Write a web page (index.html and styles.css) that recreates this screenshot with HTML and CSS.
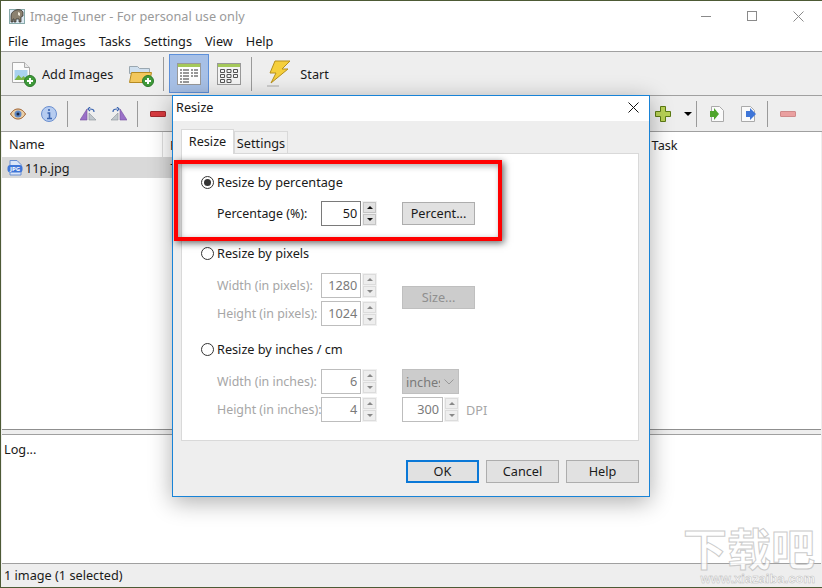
FILE: index.html
```html
<!DOCTYPE html>
<html>
<head>
    <meta charset="utf-8">
    <title>Image Tuner</title>
    <link rel="stylesheet" href="styles.css">
</head>
<body>
    <div class="window">
        <div class="titlebar">
            <svg class="app-icon" width="16" height="16" viewBox="0 0 16 16">
                <rect x="0.5" y="1.5" width="15" height="14" fill="#dce8f2" stroke="#8aa"/>
                <path d="M2 14V8c0-3 2-5 5-6 3-1 6 0 7 2v4l-2 1v5h-2v-3H7v3H5v-3H4v3z" fill="#8b8170" stroke="#2a2a26" stroke-width=".7"/>
                <path d="M9 4l2 1v3l-2-1z" fill="#efe9da"/>
            </svg>
            <span class="title-text">Image Tuner - For personal use only</span>
            <div class="caps">
                <div class="cap"><svg width="10" height="10" viewBox="0 0 10 10"><path d="M0 5.500h10" stroke="#8a8a8a"/></svg></div>
                <div class="cap"><svg width="10" height="10" viewBox="0 0 10 10"><rect x=".5" y=".5" width="9" height="9" fill="none" stroke="#8a8a8a"/></svg></div>
                <div class="cap"><svg width="11" height="11" viewBox="0 0 11 11"><path d="M.5.5l10 10M10.500.5l-10 10" stroke="#8a8a8a"/></svg></div>
            </div>
        </div>

        <div class="menubar">
            <span>File</span><span>Images</span><span>Tasks</span><span>Settings</span><span>View</span><span>Help</span>
        </div>

        <div class="toolbar">
            <svg class="tb-add" width="26" height="26" viewBox="0 0 26 26">
                <path d="M2.500 1.500h12l5 5v15h-17z" fill="#fbfbfb" stroke="#aaa"/>
                <path d="M14.500 1.500v5h5" fill="#e8e8e8" stroke="#aaa"/>
                <rect x="4.500" y="9" width="13" height="10" fill="#a9d2f0"/>
                <path d="M4.500 19l4-5 3 3 2-2 4 4z" fill="#7ab648"/>
                <circle cx="20" cy="20" r="5.500" fill="#3f9a3a" stroke="#2c7a2a"/>
                <path d="M20 17v6M17 20h6" stroke="#fff" stroke-width="2"/>
            </svg>
            <span class="tb-label">Add Images</span>
            <svg class="tb-folder" width="26" height="26" viewBox="0 0 26 26">
                <path d="M1.500 5.500h8l2 2h10v5h-20z" fill="#cfdfee" stroke="#9aa7b0"/>
                <path d="M1.500 21.500l2-10h20l-2 10z" fill="#f2c75c" stroke="#b58a22"/>
                <circle cx="20" cy="20" r="5.500" fill="#3f9a3a" stroke="#2c7a2a"/>
                <path d="M20 17v6M17 20h6" stroke="#fff" stroke-width="2"/>
            </svg>
            <div class="sep sep-tall"></div>
            <div class="view-btn selected">
                <svg width="24" height="22" viewBox="0 0 24 22">
                    <rect x=".5" y=".5" width="23" height="21" fill="#fff" stroke="#999"/>
                    <rect x="1" y="1" width="22" height="3" fill="#a5c95a"/>
                    <path d="M3 7h2M6 7h6M3 10h2M6 10h6M3 13h2M6 13h6M3 16h2M6 16h6M3 19h2M6 19h6M14 7h2M17 7h4M14 10h2M17 10h4M14 13h2M17 13h4" stroke="#333"/>
                </svg>
            </div>
            <div class="view-btn">
                <svg width="24" height="22" viewBox="0 0 24 22">
                    <rect x=".5" y=".5" width="23" height="21" fill="#f4f4f4" stroke="#999"/>
                    <rect x="1" y="1" width="22" height="3" fill="#a5c95a"/>
                    <path d="M3.500 6.500h4v3h-4zM10 6.500h4v3h-4zM16.500 6.500h4v3h-4zM3.500 11.500h4v3h-4zM10 11.500h4v3h-4zM16.500 11.500h4v3h-4zM3.500 16.500h4v3h-4zM10 16.500h4v3h-4z" fill="none" stroke="#555"/>
                </svg>
            </div>
            <div class="sep sep-tall sep-view"></div>
            <svg class="tb-bolt" width="26" height="30" viewBox="0 0 26 30">
                <path d="M10 2h15l-8 8h6L6 24l5-10H5z" fill="#f5cf3c" stroke="#b58f1c"/>
                <path d="M2 27h12" stroke="#ccc" stroke-width="2"/>
            </svg>
            <span class="tb-label tb-start">Start</span>
        </div>

        <div class="toolbar2">
            <svg class="t2-eye" width="16" height="12" viewBox="0 0 16 12">
                <path d="M.5 6C3 2 5.500 1 8 1s5 1 7.500 5C13 10 10.500 11 8 11S3 10 .5 6z" fill="#e9cfa8" stroke="#9b5a26"/>
                <circle cx="8" cy="6" r="3.500" fill="#5c86c4"/>
                <circle cx="8" cy="6" r="1.500" fill="#1d2a44"/>
            </svg>
            <svg class="t2-info" width="16" height="16" viewBox="0 0 16 16">
                <circle cx="8" cy="8" r="7.500" fill="#b6ccf0" stroke="#6b8fcf"/>
                <path d="M8 3v2M6.500 7H8.500v5M6 12.500h5" stroke="#3a64b0" stroke-width="1.600" fill="none"/>
            </svg>
            <div class="sep t2-sep1"></div>
            <svg class="t2-flip1" width="16" height="14" viewBox="0 0 16 14">
                <path d="M7 2v11H0z" fill="#9a70c8" stroke="#75509f" stroke-width=".6"/>
                <path d="M9 13V6l7 7z" fill="#bfc6cc" stroke="#8a9299" stroke-width=".6"/>
                <path d="M14 5c0-2-1-3-4-3M10 0L8 2l2 2" fill="none" stroke="#3a64b0" stroke-width="1.200"/>
            </svg>
            <svg class="t2-flip2" width="16" height="14" viewBox="0 0 16 14">
                <path d="M9 2v11h7z" fill="#9a70c8" stroke="#75509f" stroke-width=".6"/>
                <path d="M7 13V6l-7 7z" fill="#bfc6cc" stroke="#8a9299" stroke-width=".6"/>
                <path d="M2 5c0-2 1-3 4-3M6 0l2 2-2 2" fill="none" stroke="#3a64b0" stroke-width="1.200"/>
            </svg>
            <div class="sep t2-sep2"></div>
            <div class="minus t2-minus"></div>

            <svg class="t2-plus" width="16" height="16" viewBox="0 0 16 16">
                <path d="M5.500.5h5v5h5v5h-5v5h-5v-5h-5v-5h5z" fill="#b9d256" stroke="#5c7a14"/>
            </svg>
            <div class="drop-arrow"></div>
            <div class="sep t2-sep3"></div>
            <svg class="t2-doc" width="14" height="16" viewBox="0 0 14 16">
                <path d="M1.500.5h8l4 4v11h-12z" fill="#fafafa" stroke="#aaa"/>
                <path d="M0 5h4V2l5 6-5 6v-3H0z" fill="#4fa52c"/>
            </svg>
            <svg class="t2-doc2" width="16" height="16" viewBox="0 0 16 16">
                <path d="M.5.5h9l4 4v11H.5z" fill="#fafafa" stroke="#aaa"/>
                <path d="M5 5h4V2l6 6-6 6v-3H5z" fill="#3f76d8"/>
            </svg>
            <div class="sep t2-sep4"></div>
            <div class="minus minus-off t2-minus2"></div>
        </div>

        <div class="list">
            <div class="list-head">
                <span class="col-name">Name</span>
                <span class="col-file">F</span>
                <span class="col-task">Task</span>
            </div>
            <div class="list-row">
                <svg width="16" height="16" viewBox="0 0 16 16">
                    <path d="M3 .5h7l4 4v10.500H3z" fill="#dbe6f7" stroke="#6a8fd0"/>
                    <rect x=".5" y="5" width="15" height="7.500" rx="3" fill="#3f76d8"/>
                    <text x="8" y="11" font-size="6" font-weight="700" text-anchor="middle" fill="#fff">JPG</text>
                </svg>
                <span>11p.jpg</span>
                <span class="row-cut">T</span>
            </div>
        </div>

        <div class="splitter"></div>

        <div class="log">Log...</div>

        <div class="statusbar">1 image (1 selected)</div>
    </div>

    <div class="dialog">
        <div class="dlg-title">
            <span>Resize</span>
            <svg width="11" height="11" viewBox="0 0 11 11"><path d="M.5.5l10 10M10.500.5l-10 10" stroke="#111"/></svg>
        </div>
        <div class="dlg-body">
            <div class="tabs">
                <div class="tab active">Resize</div>
                <div class="tab">Settings</div>
            </div>
            <div class="pane">
                <div class="radio-row first"><span class="radio on"></span>Resize by percentage</div>
                <div class="fields fields-a">
                    <label>Percentage (%):</label>
                    <div class="num">
                        <div class="num-input focus">50</div>
                        <div class="spin"><b class="up"></b><b class="down"></b></div>
                    </div>
                    <div class="btn side">Percent...</div>
                </div>

                <div class="radio-row second"><span class="radio"></span>Resize by pixels</div>
                <div class="fields off">
                    <label>Width (in pixels):</label>
                    <div class="num">
                        <div class="num-input">1280</div>
                        <div class="spin"><b class="up"></b><b class="down"></b></div>
                    </div>
                    <div class="btn btn-off side span2">Size...</div>
                    <label>Height (in pixels):</label>
                    <div class="num">
                        <div class="num-input">1024</div>
                        <div class="spin"><b class="up"></b><b class="down"></b></div>
                    </div>
                </div>

                <div class="radio-row third"><span class="radio"></span>Resize by inches / cm</div>
                <div class="fields off">
                    <label>Width (in inches):</label>
                    <div class="num">
                        <div class="num-input">6</div>
                        <div class="spin"><b class="up"></b><b class="down"></b></div>
                    </div>
                    <div class="select side">
                        <span>inches</span>
                        <svg width="10" height="6" viewBox="0 0 10 6"><path d="M.5.5L5 5 9.500.5" fill="none" stroke="#999"/></svg>
                    </div>
                    <label>Height (in inches):</label>
                    <div class="num">
                        <div class="num-input">4</div>
                        <div class="spin"><b class="up"></b><b class="down"></b></div>
                    </div>
                    <div class="dpi side">
                        <div class="num">
                            <div class="num-input">300</div>
                            <div class="spin"><b class="up"></b><b class="down"></b></div>
                        </div>
                        <span class="dpi-label">DPI</span>
                    </div>
                </div>
            </div>
            <div class="dlg-buttons">
                <div class="btn default">OK</div>
                <div class="btn">Cancel</div>
                <div class="btn">Help</div>
            </div>
        </div>
        <div class="highlight"></div>
    </div>

    <div class="watermark">
        <div class="wm-big">下载吧</div>
        <div class="wm-small">www.xiazaiba.com</div>
    </div>
</body>
</html>
```

FILE: styles.css
```css
* {
    box-sizing: border-box;
}

html, body {
    margin: 0;
    height: 100%;
    overflow: hidden;
}

body {
    position: relative;
    width: 822px;
    height: 588px;
    background: #4d5a35;
    font-family: "Noto Sans", "Liberation Sans", sans-serif;
    font-size: 12.7px;
    color: #1a1a1a;
}

.window {
    display: flex;
    flex-direction: column;
    margin: 1px 0 1px 1px;
    height: 586px;
    background: #eee;
}

/* title + menu */
.titlebar {
    display: flex;
    align-items: center;
    height: 30px;
    background: #fff;
    padding: 0 1px 0 8px;
    flex: none;
}

.app-icon {
    margin-right: 5px;
}

.title-text {
    color: #9a9a9a;
}

.caps {
    display: flex;
    margin-left: auto;
    height: 30px;
}

.cap {
    display: flex;
    align-items: center;
    justify-content: center;
    width: 46px;
}

.menubar {
    display: flex;
    gap: 13px;
    align-items: center;
    height: 21px;
    padding-left: 7px;
    background: #fff;
    border-bottom: 1px solid #a0a0a0;
    flex: none;
}

/* main toolbar */
.toolbar {
    display: flex;
    align-items: center;
    height: 44px;
    border-bottom: 1px solid #a0a0a0;
    padding-left: 9px;
    flex: none;
}

.tb-label {
    margin-left: 6px;
}

.tb-folder {
    margin-left: 15px;
}

.sep {
    width: 1px;
    background: #9a9a9a;
    flex: none;
}

.sep-tall {
    height: 34px;
    margin-left: 9px;
}

.view-btn {
    display: flex;
    align-items: center;
    justify-content: center;
    width: 40px;
    height: 39px;
    margin-left: 5px;
    border: 1px solid transparent;
}

.view-btn.selected {
    background: #a7c0e6;
    border-color: #5d90da;
}

.view-btn + .view-btn {
    margin-left: 0;
}

.sep-view {
    margin-left: 2px;
}

.tb-bolt {
    margin-left: 13px;
}

.tb-start {
    margin-left: 9px;
}

/* second toolbar */
.toolbar2 {
    display: flex;
    align-items: center;
    height: 36px;
    border-bottom: 1px solid #a0a0a0;
    padding-left: 9px;
    flex: none;
}

.toolbar2 .sep {
    height: 26px;
}

.t2-info { margin-left: 15px; }
.t2-sep1 { margin-left: 10px; }
.t2-flip1 { margin-left: 12px; }
.t2-flip2 { margin-left: 15px; }
.t2-sep2 { margin-left: 10px; }
.t2-minus { margin-left: 12px; }
.t2-plus { margin-left: 489px; }
.t2-sep3 { margin-left: 4px; }
.t2-doc { margin-left: 13px; }
.t2-doc2 { margin-left: 17px; }
.t2-sep4 { margin-left: 10px; }
.t2-minus2 { margin-left: 12px; }

.minus {
    width: 16px;
    height: 6px;
    background: #d83a3f;
    border: 1px solid #a22a2e;
    border-radius: 1px;
    flex: none;
}

.minus-off {
    background: #eaa0a0;
    border-color: #cf8a8a;
}

.drop-arrow {
    width: 0;
    height: 0;
    margin-left: 13px;
    border-left: 4px solid transparent;
    border-right: 4px solid transparent;
    border-top: 4px solid #000;
}

/* file list */
.list {
    position: relative;
    height: 298px;
    margin: 0 1px;
    background: #fff;
    border-bottom: 1px solid #8f8f8f;
    flex: none;
}

.list-head {
    display: flex;
    align-items: center;
    height: 25px;
    padding-left: 7px;
}

.col-name {
    width: 154px;
    border-right: 1px solid #ddd;
    line-height: 25px;
}

.col-file {
    margin-left: 7px;
}

.col-task {
    margin-left: 475px;
}

.list-row {
    display: flex;
    align-items: center;
    gap: 2px;
    height: 21px;
    padding-left: 5px;
    width: 180px;
    background: #d9d9d9;
}

.row-cut {
    margin-left: 99px;
}

.splitter {
    height: 4px;
    flex: none;
}

.log {
    height: 130px;
    margin: 0 1px;
    padding: 5px 2px;
    background: #fff;
    border-top: 1px solid #a0a0a0;
    border-bottom: 1px solid #a0a0a0;
    flex: none;
}

.statusbar {
    display: flex;
    align-items: center;
    flex: 1;
    padding: 0 0 2px 3px;
}

/* resize dialog */
.dialog {
    position: absolute;
    left: 172px;
    top: 95px;
    width: 478px;
    height: 402px;
    display: flex;
    flex-direction: column;
    background: #eee;
    border: 1px solid #1883d7;
    box-shadow: 0 5px 22px rgba(0, 0, 0, 0.32);
}

.dlg-title {
    display: flex;
    align-items: center;
    justify-content: space-between;
    height: 25px;
    padding: 0 10px 3px 3px;
    background: #fff;
    flex: none;
}

.dlg-body {
    flex: 1;
    padding: 8px 10px 0 8px;
}

.tabs {
    display: flex;
    align-items: flex-end;
    height: 24px;
}

.tab {
    height: 22px;
    width: 54px;
    line-height: 22px;
    text-align: center;
    background: #f0f0f0;
    border: 1px solid #d9d9d9;
    border-bottom: none;
}

.tab.active {
    position: relative;
    z-index: 1;
    width: 53px;
    height: 25px;
    line-height: 23px;
    background: #fff;
    margin-bottom: -1px;
}

.pane {
    height: 288px;
    padding: 18px 0 0 19px;
    background: #fff;
    border: 1px solid #d9d9d9;
}

.radio-row {
    display: flex;
    align-items: center;
    gap: 3px;
    height: 20px;
}

.radio-row.second { margin-top: 17px; }
.radio-row.third { margin-top: 13px; }

.radio {
    position: relative;
    width: 13px;
    height: 13px;
    background: #fff;
    border: 1px solid #333;
    border-radius: 50%;
    flex: none;
}

.radio.on::after {
    content: "";
    position: absolute;
    left: 2px;
    top: 2px;
    width: 7px;
    height: 7px;
    border-radius: 50%;
    background: #333;
}

.fields {
    display: grid;
    grid-template-columns: 104px 56px auto;
    grid-auto-rows: 25px;
    row-gap: 3px;
    justify-content: start;
    align-items: center;
    margin-top: 10px;
    padding-left: 16px;
}

.fields-a {
    margin-top: 9px;
}

.fields label {
    padding-bottom: 1px;
    font-size: 12.4px;
    white-space: nowrap;
}

.fields.off label,
.fields.off .dpi-label {
    color: #a6a6a6;
}

.num {
    display: flex;
    gap: 1px;
    height: 25px;
}

.num-input {
    width: 41px;
    padding-right: 3px;
    line-height: 22px;
    text-align: right;
    background: #fff;
    border: 1px solid #bdbdbd;
}

.off .num-input {
    color: #7a7a7a;
}

.num-input.focus {
    border-color: #7a7a7a;
}

.spin {
    display: flex;
    flex-direction: column;
    justify-content: space-between;
    width: 15px;
    height: 25px;
    padding: 1px;
    background: #f0f0f0;
}

.spin b {
    display: flex;
    align-items: center;
    justify-content: center;
    height: 11px;
    background: #e1e1e1;
    border: 1px solid #c4c4c4;
}

.spin b::after {
    content: "";
    border-left: 3px solid transparent;
    border-right: 3px solid transparent;
}

.spin .up::after { border-bottom: 3px solid #111; }
.spin .down::after { border-top: 3px solid #111; }

.off .spin b {
    background: #eee;
    border-color: #dcdcdc;
}

.off .spin .up::after { border-bottom-color: #888; }
.off .spin .down::after { border-top-color: #888; }

.btn {
    width: 73px;
    height: 23px;
    line-height: 21px;
    text-align: center;
    background: #e1e1e1;
    border: 1px solid #adadad;
}

.side {
    margin-left: 25px;
}

.span2 {
    grid-row: span 2;
    align-self: start;
    margin-top: 13px;
}

.btn-off {
    background: #ccc;
    border-color: #bfbfbf;
    color: #8f8f8f;
}

.select {
    display: flex;
    align-items: center;
    justify-content: space-between;
    width: 57px;
    height: 25px;
    padding: 0 4px 0 3px;
    color: #7a7a7a;
    background: #ccc;
    border: 1px solid #bfbfbf;
}

.select span {
    width: 34px;
    overflow: hidden;
    line-height: 22px;
}

.select svg {
    flex: none;
}

.dpi {
    display: flex;
    align-items: center;
}

.dpi-label {
    margin-left: 7px;
}

.dlg-buttons {
    display: flex;
    justify-content: flex-end;
    gap: 7px;
    margin-top: 19px;
}

.btn.default {
    border: 2px solid #0a78d7;
    line-height: 19px;
}

.highlight {
    position: absolute;
    left: 1px;
    top: 64px;
    width: 328px;
    height: 81px;
    border: 4px solid #f00;
    box-shadow: 2px 2px 7px rgba(0, 0, 0, 0.6), inset 2px 2px 6px rgba(0, 0, 0, 0.35);
}

/* site stamp in the corner */
.watermark {
    position: absolute;
    right: 7px;
    top: 522px;
    width: 134px;
    font-family: "Noto Sans CJK SC", sans-serif;
    text-align: right;
    color: #fff;
    opacity: 0.8;
}

.wm-big {
    font-size: 44px;
    line-height: 50px;
    font-weight: 700;
    -webkit-text-stroke: 1px #c0c0c0;
}

.wm-small {
    font-family: "Liberation Sans", sans-serif;
    font-size: 13px;
    line-height: 13px;
    font-weight: 700;
    -webkit-text-stroke: 0.5px #b0b0b0;
}
```
